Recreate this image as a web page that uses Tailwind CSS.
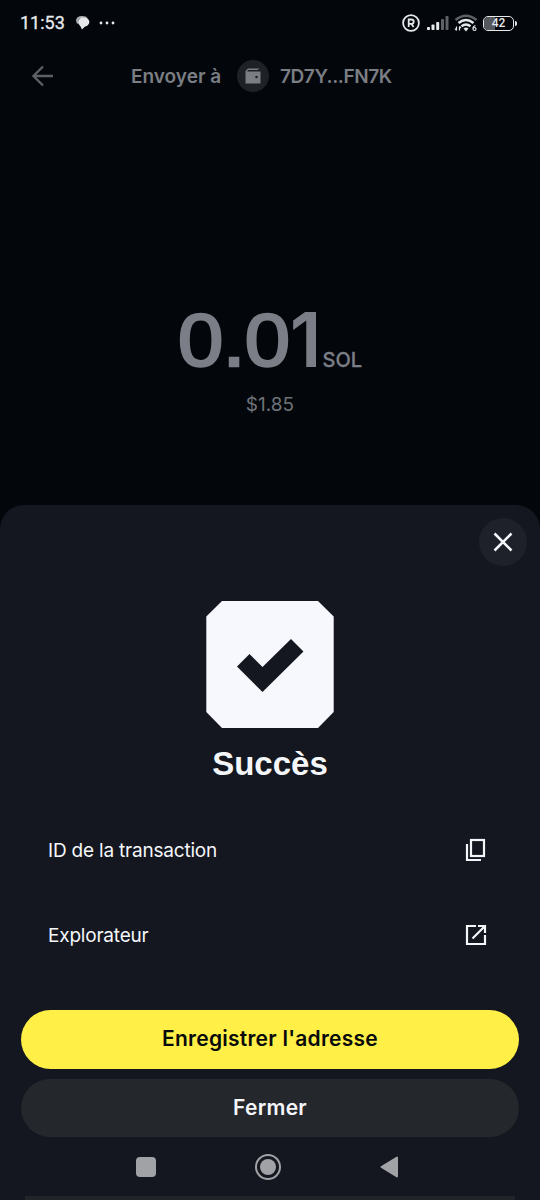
<!DOCTYPE html>
<html lang="fr">
<head>
    <meta charset="UTF-8">
    <meta name="viewport" content="width=device-width, initial-scale=1.0">
    <title>Envoyer</title>
    <script src="https://cdn.jsdelivr.net/npm/@tailwindcss/browser@4"></script>
</head>
<body class="bg-[#03070c] font-['Inter',sans-serif]">
    <div class="w-[540px] h-[1200px] flex flex-col overflow-hidden">
        <!-- Status bar -->
        <div class="h-[46px] shrink-0 flex items-center justify-between pl-5 pr-[23px] text-[#e6e8ea]">
            <div class="flex items-center">
                <span class="w-[46px] font-['Roboto',sans-serif] text-[18px] leading-none [-webkit-text-stroke:0.3px]">11:53</span>
                <svg class="ml-[9px]" width="16" height="16" viewBox="0 0 16 16">
                    <path d="M1 5 Q2 1 7 1 Q11 1 13 3 Q7 1.500 4 4 Q2 6 3 9 Q1 8 1 5Z" fill="#aeb1b4"/>
                    <ellipse cx="8.700" cy="7" rx="5.700" ry="4.700" fill="currentColor"/>
                    <path d="M4.500 9.500L7 14.500L11.500 10Z" fill="currentColor"/>
                </svg>
                <svg class="ml-[8px]" width="16" height="4" viewBox="0 0 16 4" fill="currentColor">
                    <circle cx="2" cy="2" r="1.400"/><circle cx="8" cy="2" r="1.400"/><circle cx="14" cy="2" r="1.400"/>
                </svg>
            </div>
            <div class="flex items-center">
                <svg width="18" height="18" viewBox="0 0 18 18" fill="none" stroke="currentColor">
                    <circle cx="9" cy="9" r="7.900" stroke-width="1.800"/>
                    <path d="M6.700 13V5.500H9.300Q11.700 5.500 11.700 7.700Q11.700 9.800 9.300 9.800H6.700M9.300 9.800L11.600 13" stroke-width="1.800"/>
                </svg>
                <svg class="ml-[7px]" width="22" height="14" viewBox="0 0 22 14" fill="currentColor">
                    <rect x="0" y="11" width="3" height="3" rx=".8"/>
                    <rect x="4.500" y="8.500" width="3" height="5.500" rx=".8"/>
                    <rect x="9.200" y="6" width="3" height="8" rx=".8"/>
                    <g opacity=".4"><rect x="14" y="3" width="3" height="11" rx=".8"/><rect x="18.500" y="0" width="3" height="14" rx=".8"/></g>
                </svg>
                <svg class="ml-[5px]" width="24" height="18" viewBox="0 0 24 18" fill="none" stroke="currentColor">
                    <path d="M1.500 6Q12 -2.500 22.500 6" stroke-width="2.500" opacity=".4"/>
                    <path d="M4.500 9Q12 3 19.500 9M7.500 12.200Q12 8.600 16.500 12.200" stroke-width="2.400"/>
                    <path d="M9.500 14.500Q12 12.500 14.500 14.500L12 17.500Z" fill="currentColor" stroke="none"/>
                    <path d="M2.500 12.500V16.500M1 14.500L2.500 16.500M5.500 16.500V12.500M7 14L5.500 12.500M21.500 11.500Q19 12 19 14.500" stroke-width="1.200"/>
                    <circle cx="20.500" cy="15" r="1.500" stroke-width="1.200"/>
                </svg>
                <div class="ml-[5px] relative w-[31px] h-[15px] rounded-[5px] border-[1.500px] border-current flex items-center justify-center overflow-hidden">
                    <div class="absolute left-0 top-0 h-full w-[11px] bg-[#55585d]"></div>
                    <span class="relative font-['Roboto',sans-serif] font-medium text-[12px] leading-none">42</span>
                </div>
                <div class="ml-px w-[2px] h-[5px] rounded-r bg-current"></div>
            </div>
        </div>

        <!-- Header -->
        <div class="h-[60px] shrink-0 flex items-center pl-8 text-[#7b7e83] font-semibold text-[19px] leading-none whitespace-nowrap">
            <svg width="22" height="22" viewBox="0 0 22 22" fill="none" stroke="#5d6064" stroke-width="2.300">
                <path d="M21 11H1.500M11 1.500L1.500 11L11 20.500"/>
            </svg>
            <span class="ml-[77px] w-[106px]">Envoyer à</span>
            <span class="w-8 h-8 rounded-full bg-[#1e2227] flex items-center justify-center">
                <svg width="16" height="16" viewBox="0 0 16 16" fill="#7b7e83">
                    <path d="M3 .5H14.500L12.500 2H3.200L2 3.500H15.500V15.500H.5V3Z"/>
                    <circle cx="11.500" cy="9" r="1.300" fill="#1e2227"/>
                </svg>
            </span>
            <span class="ml-[11px] tracking-[-0.4px]">7D7Y...FN7K</span>
        </div>

        <!-- Amount -->
        <div class="h-[399px] shrink-0 flex flex-col items-center pt-[196px] text-[#7b7e86]">
            <div class="h-[75px] flex items-baseline leading-[75px]">
                <span class="w-[112px] origin-left scale-x-110 -translate-y-px font-['Liberation_Sans',sans-serif] text-[74px] tracking-[-0.5px] [-webkit-text-stroke:2.5px]">0.0</span>
                <span class="text-[75px] font-semibold tracking-[-2px]">1</span>
                <span class="ml-[3px] text-[20px] font-medium [-webkit-text-stroke:0.3px]">SOL</span>
            </div>
            <div class="mt-[18px] text-[19px] leading-none text-[#6f7277]">$1.85</div>
        </div>

        <!-- Success sheet -->
        <div class="relative grow flex flex-col items-center rounded-t-[24px] bg-[#14171f] text-[#f4f6fa]">
            <button class="absolute right-[13px] top-[13px] w-12 h-12 rounded-full bg-[#1e2129] flex items-center justify-center">
                <svg width="20" height="20" viewBox="0 0 20 20" fill="none" stroke="currentColor" stroke-width="2.500">
                    <path d="M1.500 1.500L18.500 18.500M18.500 1.500L1.500 18.500"/>
                </svg>
            </button>

            <svg class="mt-[95px] shrink-0" width="128" height="128" viewBox="0 0 128 128">
                <path d="M16 1H112L127.700 16.500V112L112 128H16L.3 112V16.500Z" fill="#f7f8fe"/>
                <path d="M31 66.500L43.500 54L56.500 67L85 39L97.500 51.500L56.500 92Z" fill="#14171f"/>
            </svg>
            <h1 class="mt-[20px] h-8 font-['Liberation_Sans',sans-serif] text-[33px] leading-8 font-bold">Succès</h1>

            <div class="w-full mt-[48px] pl-12 pr-[53px] text-[19px] tracking-[-0.2px]">
                <div class="h-[44px] flex items-center justify-between">
                    <span class="pt-[2px]">ID de la transaction</span>
                    <svg width="22" height="24" viewBox="0 0 22 24" fill="none" stroke="currentColor" stroke-width="2.200">
                        <rect x="6" y="2" width="13" height="16"/>
                        <path d="M2 6V22H16"/>
                    </svg>
                </div>
                <div class="mt-[41px] h-[44px] flex items-center justify-between">
                    <span class="pt-[2px]">Explorateur</span>
                    <svg width="22" height="22" viewBox="0 0 22 22" fill="none" stroke="currentColor" stroke-width="2.200">
                        <path d="M11 2H2V20H20V11M13 2H20V9M20 2L7.500 14.500"/>
                    </svg>
                </div>
            </div>

            <div class="mt-[53px] w-[498px] flex flex-col gap-[10px] text-[21px] tracking-[0.25px] font-semibold">
                <button class="h-[59px] pb-px rounded-full bg-[#ffef46] text-[#080a0c]">Enregistrer l'adresse</button>
                <button class="h-[58px] rounded-full bg-[#24272b]">Fermer</button>
            </div>

            <!-- Navigation bar -->
            <div class="w-full h-[59px] flex items-center pl-[136px] text-[#a1a2a6]">
                <div class="w-5 h-5 rounded-[4px] bg-current"></div>
                <svg class="ml-[98px]" width="28" height="28" viewBox="0 0 28 28">
                    <circle cx="14" cy="14" r="12" fill="none" stroke="currentColor" stroke-width="2"/>
                    <circle cx="14" cy="14" r="8" fill="currentColor"/>
                </svg>
                <svg class="ml-[97px]" width="20" height="24" viewBox="0 0 20 24" fill="currentColor" stroke="currentColor" stroke-width="2" stroke-linejoin="round">
                    <path d="M2.500 12L18 2.500V21.500Z"/>
                </svg>
            </div>
            <div class="w-[490px] grow bg-[#212429]"></div>
        </div>
    </div>
</body>
</html>
